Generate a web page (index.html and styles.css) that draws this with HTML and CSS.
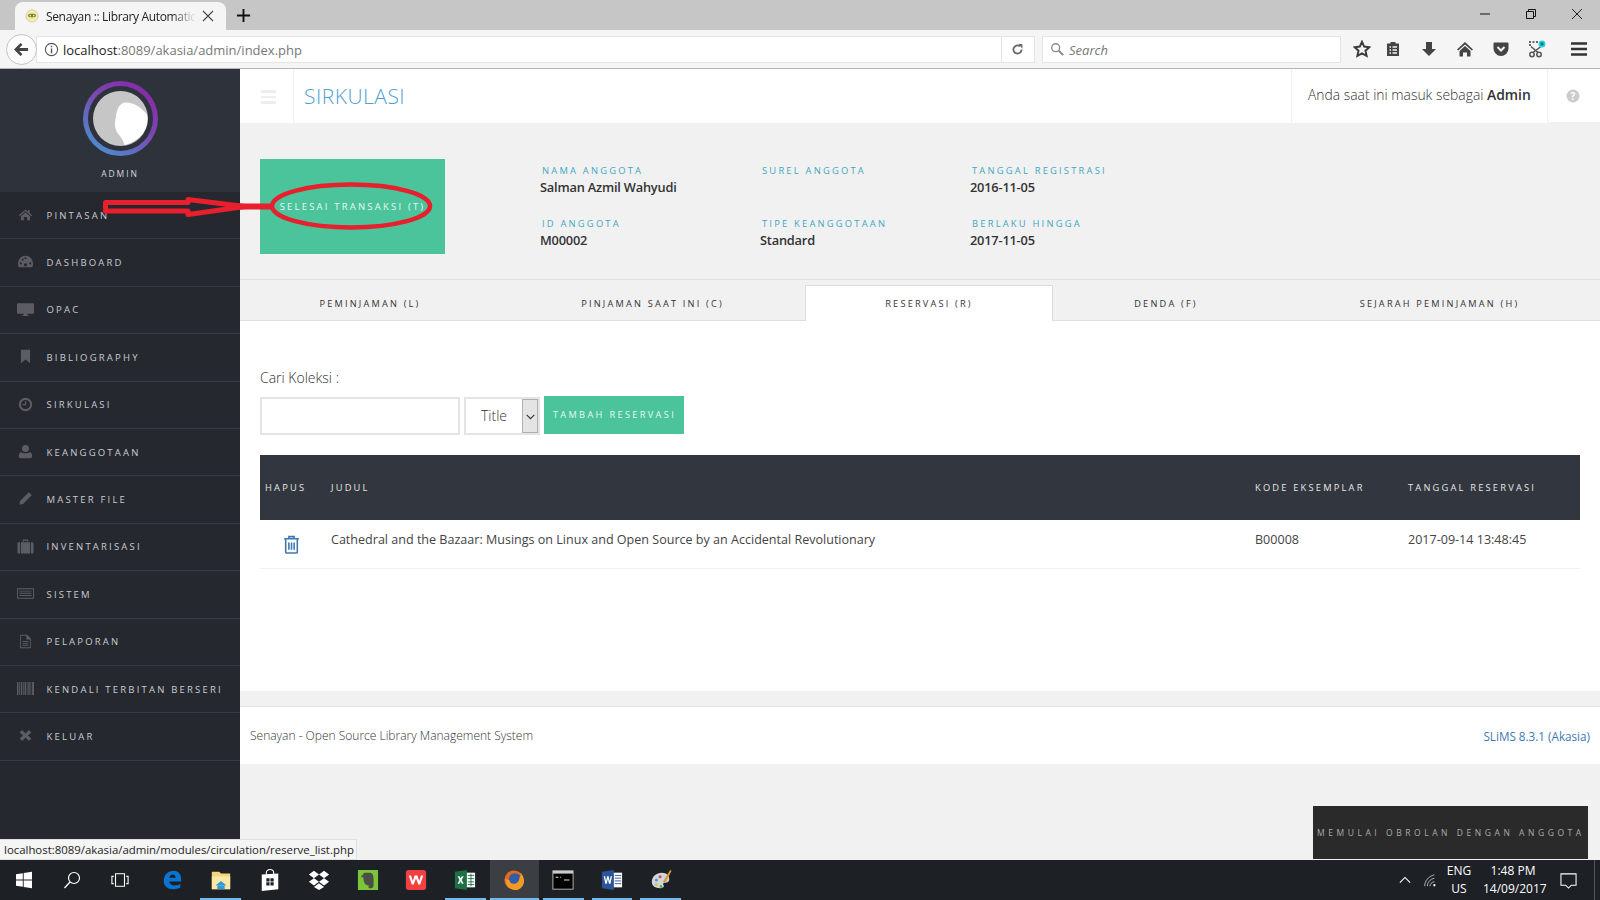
FILE: index.html
```html
<!DOCTYPE html>
<html>
<head>
<title>Senayan :: Library Automation</title>
<link rel="stylesheet" href="styles.css">
</head>
<body>
<div class="tabbar">
	<div class="browser-tab">
		<svg class="favicon" viewBox="0 0 16 16"><circle cx="8" cy="8" r="7" fill="#f3ee9a" stroke="#ccc"/><rect x="3.500" y="5.500" width="9" height="4" rx="2" fill="#777"/><circle cx="6" cy="7.500" r="1" fill="#ff0"/><circle cx="10" cy="7.500" r="1" fill="#ff0"/></svg>
		<span class="browser-tab-title">Senayan :: Library Automatic</span>
		<svg class="tab-close" viewBox="0 0 12 12"><path d="M1 1l10 10M11 1L1 11" stroke="#444" stroke-width="1.1" fill="none"/></svg>
	</div>
	<svg class="new-tab" viewBox="0 0 16 16"><path d="M8 1v14M1 8h14" stroke="#111" stroke-width="2"/></svg>
	<div class="win-controls">
		<svg viewBox="0 0 12 12"><path d="M1 6h10" stroke="#111" stroke-width="1"/></svg>
		<svg viewBox="0 0 12 12"><path d="M1.5 3.5h7v7h-7zM3.5 3.5v-2h7v7h-2" stroke="#111" fill="none"/></svg>
		<svg viewBox="0 0 12 12"><path d="M1 1l10 10M11 1L1 11" stroke="#111" fill="none" stroke-width=".9"/></svg>
	</div>
</div>
<div class="navbar">
	<div class="back-btn"><svg viewBox="0 0 16 16"><path d="M8 2L2 8l6 6M2.5 8H15" stroke="#444" stroke-width="3" fill="none"/></svg></div>
	<div class="urlbar">
		<svg class="info" viewBox="0 0 16 16"><circle cx="8" cy="8" r="6.5" fill="none" stroke="#555" stroke-width="1.2"/><path d="M8 7v5M8 4v1.6" stroke="#555" stroke-width="1.5"/></svg>
		<span class="url"><span class="url-host">localhost</span>:8089/akasia/admin/index.php</span>
		<div class="reload"><svg viewBox="0 0 16 16"><path d="M13 8a5 5 0 1 1-2-4" stroke="#666" stroke-width="2.2" fill="none"/><path d="M9 1l5 .5V7z" fill="#666"/></svg></div>
	</div>
	<div class="searchbar">
		<svg viewBox="0 0 16 16"><circle cx="6.5" cy="6.5" r="4.5" fill="none" stroke="#888" stroke-width="1.6"/><path d="M10 10l5 5" stroke="#888" stroke-width="2.2"/></svg>
		<span>Search</span>
	</div>
	<div class="nav-icons">
		<svg class="ni-star" viewBox="0 0 18 18"><path d="M9 1.8l2.2 4.8 5.2.6-3.9 3.5 1.1 5.2L9 13.3l-4.6 2.6 1.1-5.2L1.6 7.2l5.2-.6z" fill="none" stroke="#3d3d3d" stroke-width="2"/></svg>
		<svg class="ni-clip" viewBox="0 0 18 18"><path d="M3 3.5h3.5V2h5v1.500H15V16H3z" fill="#444"/><path d="M5.500 7h1.500M8.500 7H13M5.500 10h1.500M8.500 10H13M5.500 13h1.500M8.500 13H13" stroke="#f5f5f5" stroke-width="1.300"/></svg>
		<svg class="ni-down" viewBox="0 0 18 18"><path d="M6 2h6v7h4l-7 7-7-7h4z" fill="#444"/></svg>
		<svg class="ni-home" viewBox="0 0 18 18"><path d="M9 2L1 9.500l1.200 1L9 4.500l6.800 6 1.200-1zM3.500 11L9 6l5.500 5v5.500H11v-4H7v4H3.500z" fill="#444"/></svg>
		<svg class="ni-pocket" viewBox="0 0 18 18"><path d="M2.500 2.500h13a1 1 0 0 1 1 1v5a7.500 7.500 0 0 1-15 0v-5a1 1 0 0 1 1-1z" fill="#444"/><path d="M5.500 7L9 10.500 12.500 7" stroke="#f5f5f5" stroke-width="2" fill="none"/></svg>
		<svg class="ni-cut" viewBox="0 0 18 18"><circle cx="4" cy="14.500" r="2.200" fill="none" stroke="#555" stroke-width="1.500"/><circle cx="11" cy="14.500" r="2.200" fill="none" stroke="#555" stroke-width="1.500"/><path d="M5 12.500l8-6M10 12.500L3 6.500" stroke="#555" stroke-width="1.500"/><path d="M1 2h10M1 5h3" stroke="#666" stroke-width="2" stroke-dasharray="2 1.500"/><circle cx="14" cy="4" r="3.500" fill="#22d5e0"/><path d="M14 2v4M12.300 3l3.400 2M15.700 3l-3.400 2" stroke="#155" stroke-width=".8"/></svg>
		<svg class="ni-menu" viewBox="0 0 18 18"><path d="M1 3.500h16M1 9h16M1 14.500h16" stroke="#333" stroke-width="2.600"/></svg>
	</div>
</div>

<div class="app">
	<aside class="sidebar">
		<div class="profile">
			<div class="avatar-ring">
				<svg class="avatar" viewBox="0 0 56 56"><circle cx="28" cy="28" r="28" fill="#c6c6c6"/><path d="M31 12c8-2 18 4 24 12 2 12-4 26-23 31-1-5-4-9-7-12-3-5-3-10-2-15 1-8 3-14 8-16z" fill="#fff"/></svg>
			</div>
			<div class="profile-name">ADMIN</div>
		</div>
		<ul class="menu">
			<li><svg viewBox="0 0 18 18"><path d="M9 3L1 10l1 1 7-6 7 6 1-1-3-2.600V3.500h-2v2.200zM3.500 11L9 6.500l5.500 4.500v5H11v-4H7v4H3.500z"/></svg>PINTASAN</li>
			<li><svg class="wide" viewBox="0 0 18 18"><path d="M9 3a8 8 0 0 0-8 8c0 1.500.4 3 1 4h14c.6-1 1-2.500 1-4a8 8 0 0 0-8-8z"/><g fill="#262830"><circle cx="4" cy="11" r="1.100"/><circle cx="6" cy="7" r="1.100"/><circle cx="9" cy="5.500" r="1.100"/><circle cx="14" cy="11" r="1.100"/><circle cx="9" cy="12.500" r="1.700"/></g></svg>DASHBOARD</li>
			<li><svg class="wide" viewBox="0 0 18 18"><path d="M1 2.500h16a1 1 0 0 1 1 1v9a1 1 0 0 1-1 1h-6V15h1.500v1h-7v-1H7v-1.500H1a1 1 0 0 1-1-1v-9a1 1 0 0 1 1-1z"/></svg>OPAC</li>
			<li><svg viewBox="0 0 18 18"><path d="M3.500 1h11v16L9 12.500 3.500 17z"/></svg>BIBLIOGRAPHY</li>
			<li><svg viewBox="0 0 18 18"><path fill-rule="evenodd" d="M9 1a8 8 0 1 0 0 16A8 8 0 0 0 9 1zm0 2.500a5.500 5.500 0 1 1 0 11 5.500 5.500 0 0 1 0-11z"/><path d="M8.200 5h1.600v4.800H5.500V8.300h2.700z"/></svg>SIRKULASI</li>
			<li><svg viewBox="0 0 18 18"><circle cx="9" cy="5.500" r="4.200"/><path d="M3.500 9.500C5 10.800 7 11.200 9 11.200s4-.4 5.500-1.700c1.800.8 2.500 3 2.500 5.500 0 1.200-1 2-2 2H3c-1 0-2-.8-2-2 0-2.500.7-4.700 2.500-5.500z"/></svg>KEANGGOTAAN</li>
			<li><svg viewBox="0 0 18 18"><path d="M13 1.500l3.500 3.500L6 15.500 1.500 16.500 2.500 12z"/></svg>MASTER FILE</li>
			<li><svg class="wide" viewBox="0 0 18 18"><path d="M6 4V2.500A1 1 0 0 1 7 1.500h4a1 1 0 0 1 1 1V4h-1.300V3H7.300v1zM1.800 4.500h1.500v12H1.800A1.300 1.300 0 0 1 .5 15.200V5.800a1.300 1.300 0 0 1 1.300-1.300zM4.200 4.500h9.600v12H4.200zM14.700 4.500h1.500a1.300 1.300 0 0 1 1.300 1.300v9.400a1.300 1.300 0 0 1-1.300 1.300h-1.500z"/></svg>INVENTARISASI</li>
			<li><svg class="wide" viewBox="0 0 18 18"><path fill-rule="evenodd" d="M0 3.500h18v11H0zm1 1v9h16v-9z"/><path d="M2.500 6h13v1h-13zM2.500 8.300h13v1h-13zM2.500 10.600h13v1h-13z"/></svg>SISTEM</li>
			<li><svg viewBox="0 0 18 18"><path fill-rule="evenodd" d="M2.500 1h8.500l4.500 4.500V17h-13zm1 1v14h11V6.500H10V2z"/><path d="M5.500 8.500h7v1h-7zM5.500 10.800h7v1h-7zM5.500 13h7v1h-7z"/></svg>PELAPORAN</li>
			<li><svg class="wide" viewBox="0 0 18 18"><path d="M0 2h1.500v14H0zM2.300 2h.8v14h-.8zM4 2h1.500v14H4zM6.300 2h.8v14h-.8zM8 2h1.500v14H8zM10.300 2h.8v14h-.8zM12 2h1.500v14H12zM14.300 2h.8v14h-.8zM16 2h2v14h-2z"/></svg>KENDALI TERBITAN BERSERI</li>
			<li><svg viewBox="0 0 18 18"><path d="M5 2.500L9 6.500l4-4 3 3-4 3.500 4 3.500-3 3-4-4-4 4-3-3 4-3.500-4-3.500z"/></svg>KELUAR</li>
		</ul>
	</aside>

	<main class="content">
		<header class="topbar">
			<div class="burger"><span></span><span></span><span></span></div>
			<h1 class="page-title">SIRKULASI</h1>
			<div class="whoami">Anda saat ini masuk sebagai <b>Admin</b></div>
			<div class="help"><svg viewBox="0 0 14 14"><circle cx="7" cy="7" r="6.500" fill="#ccc"/><text x="7" y="10.500" text-anchor="middle" class="help-mark">?</text></svg></div>
		</header>

		<section class="member">
			<button class="btn btn-finish">SELESAI TRANSAKSI (T)</button>
			<div class="member-info">
				<div class="field"><label>NAMA ANGGOTA</label><div>Salman Azmil Wahyudi</div></div>
				<div class="field"><label>SUREL ANGGOTA</label><div>&nbsp;</div></div>
				<div class="field"><label>TANGGAL REGISTRASI</label><div>2016-11-05</div></div>
				<div class="field"><label>ID ANGGOTA</label><div>M00002</div></div>
				<div class="field"><label>TIPE KEANGGOTAAN</label><div>Standard</div></div>
				<div class="field"><label>BERLAKU HINGGA</label><div>2017-11-05</div></div>
			</div>
		</section>

		<nav class="tabs">
			<a>PEMINJAMAN (L)</a>
			<a>PINJAMAN SAAT INI (C)</a>
			<a class="active">RESERVASI (R)</a>
			<a>DENDA (F)</a>
			<a>SEJARAH PEMINJAMAN (H)</a>
		</nav>

		<section class="panel">
			<div class="search-label">Cari Koleksi :</div>
			<form class="search-form">
				<input type="text" class="search-input">
				<div class="select-box"><span>Title</span><i><svg viewBox="0 0 10 10"><path d="M1.500 3.500L5 7l3.500-3.500" stroke="#333" fill="none"/></svg></i></div>
				<button type="button" class="btn btn-add">TAMBAH RESERVASI</button>
			</form>
			<table class="grid">
				<thead>
					<tr><th class="col-del">HAPUS</th><th class="col-title">JUDUL</th><th class="col-code">KODE EKSEMPLAR</th><th class="col-date">TANGGAL RESERVASI</th></tr>
				</thead>
				<tbody>
					<tr>
						<td><svg class="trash" viewBox="0 0 16 18"><path d="M5.500 3V1.500h5V3M1 3.500h14M2.500 3.500V16a1 1 0 0 0 1 1h9a1 1 0 0 0 1-1V3.500M5.500 7v7M8 7v7M10.500 7v7" fill="none" stroke="#3f78b0" stroke-width="1.500"/></svg></td>
						<td>Cathedral and the Bazaar: Musings on Linux and Open Source by an Accidental Revolutionary</td>
						<td>B00008</td>
						<td>2017-09-14 13:48:45</td>
					</tr>
				</tbody>
			</table>
		</section>

		<footer class="foot">
			<span>Senayan - Open Source Library Management System</span>
			<a>SLiMS 8.3.1 (Akasia)</a>
		</footer>
	</main>
</div>

<div class="taskbar">
	<div class="task-slot sys"><svg viewBox="0 0 18 18"><path d="M1 3.200l6.800-1V8.500H1zM8.700 2l8.300-1.200V8.500H8.700zM1 9.500h6.800v6.300l-6.800-1zM8.700 9.500H17v7.700L8.700 16z" fill="#fff"/></svg></div>
	<div class="task-slot sys"><svg viewBox="0 0 18 18"><circle cx="11" cy="7" r="5.500" fill="none" stroke="#fff" stroke-width="1.200"/><path d="M7 11l-5.500 6" stroke="#fff" stroke-width="1.300"/></svg></div>
	<div class="task-slot sys"><svg viewBox="0 0 20 18"><path d="M5 2h10v14H5zM3 5H1v8h2M17 5h2v8h-2" fill="none" stroke="#fff" stroke-width="1.200"/></svg></div>
	<div class="task-slot app-slot"><svg viewBox="0 0 24 24"><path d="M3 13C3 6 8 2 14 2c5 0 8 4 8 9v2.500H9c.3 3 3 4.500 6 4.500 2.500 0 4.500-.7 6-1.800v4.300c-2 1-4.200 1.500-7 1.500C7 22 3 18.500 3 13zm6-3.500h7c0-2-1.300-3.500-3.300-3.500C11 6 9.500 7.500 9 9.500z" fill="#0a74d0"/></svg></div>
	<div class="task-slot app-slot running"><svg viewBox="0 0 24 24"><path d="M2 3h8l2 2h10v17H2z" fill="#f4d67a"/><path d="M2 8h20v14H2z" fill="#fbe7a6"/><path d="M8 22v-4h8v4z" fill="#2f9bd8"/><path d="M6 18l6-5 6 5z" fill="#2f9bd8"/></svg></div>
	<div class="task-slot app-slot"><svg viewBox="0 0 24 24"><path d="M3 6l18-1v17l-18 2z" fill="#fff"/><path d="M8 6V4a4 3.500 0 0 1 8 0v2" fill="none" stroke="#fff" stroke-width="1.200"/><path d="M8 10h3.500v3.500H8zM12.500 10H16v3.500h-3.500zM8 14.500h3.500V18H8zM12.500 14.500H16V18h-3.500z" fill="#1d1f24"/></svg></div>
	<div class="task-slot app-slot"><svg viewBox="0 0 24 24"><path d="M6.500 2L1 6l5.500 4L12 6zM17.500 2L12 6l5.500 4L23 6zM1 14l5.500 4 5.500-4-5.500-4zM23 14l-5.500 4-5.500-4 5.500-4zM6.500 19.500L12 23l5.500-3.500L12 15.500z" fill="#fff"/></svg></div>
	<div class="task-slot app-slot"><svg viewBox="0 0 24 24"><rect x="1" y="1" width="22" height="22" rx="1" fill="#7cc43a"/><path d="M8 4h6c3 0 4 3 4 6v8c0 2-1 3-3 3h-1c-2 0-2-3 0-3-2 0-5-.5-6-3-1-2-1-4-1-6L4 9z" fill="#4a4f48"/></svg></div>
	<div class="task-slot app-slot"><svg viewBox="0 0 24 24"><rect x="1" y="1" width="22" height="22" rx="3" fill="#f0403f"/><path d="M4 7l3.500 10h2L12 10l2.500 7h2L20 7h-2.500l-2 6-2-6h-3l-2 6-2-6z" fill="#fff"/></svg></div>
	<div class="task-slot app-slot running"><svg viewBox="0 0 24 24"><path d="M1 3l13-2v22L1 21z" fill="#1d7044"/><path d="M14 4h9v16h-9z" fill="#fff"/><path d="M15 7h7M15 10.500h7M15 14h7M15 17h7M18.500 5v14" stroke="#1d7044"/><path d="M4 8l2 4-2 4h2l1.300-2.600L8.500 16h2l-2.100-4 2.100-4h-2L7.300 10.400 6 8z" fill="#fff"/></svg></div>
	<div class="task-slot app-slot running active"><svg viewBox="0 0 24 24"><circle cx="12" cy="12" r="10.500" fill="#e8691d"/><circle cx="13" cy="11" r="6.500" fill="#2f5da8"/><path d="M3 10c-1 8 5 13 10 13 6 0 10-5 10-10 0-4-2-7-4-9 1 3 0 4-1 5 0 5-4 8-7 7-3 0-4-2-4-4-2 0-3-1-4-2z" fill="#f19a24"/></svg></div>
	<div class="task-slot app-slot running"><svg viewBox="0 0 24 24"><rect x="1" y="2" width="22" height="20" fill="#000" stroke="#bbb"/><rect x="1" y="2" width="22" height="3" fill="#ccc"/><path d="M4 9h3M9 9h1M13 12h6" stroke="#ddd" stroke-width="1.200"/></svg></div>
	<div class="task-slot app-slot running"><svg viewBox="0 0 24 24"><path d="M1 3l13-2v22L1 21z" fill="#2a5699"/><path d="M14 4h9v16h-9z" fill="#fff"/><path d="M15 7h7M15 10h7M15 13h7M15 16h7" stroke="#2a5699"/><path d="M3 8l1.700 8h1.600L7.500 11l1.200 5h1.600L12 8h-1.500l-1 5L8.300 8H6.700l-1.200 5-1-5z" fill="#fff"/></svg></div>
	<div class="task-slot app-slot running"><svg viewBox="0 0 24 24"><path d="M2 14c0-6 5-10 11-10 5 0 8 3 8 7s-3 4-5 4-2 2-1 3-1 3-4 3c-5 0-9-2-9-7z" fill="#cfd6dc"/><circle cx="7" cy="12" r="1.700" fill="#3aa0e0"/><circle cx="11" cy="8.500" r="1.700" fill="#e04a3a"/><circle cx="7" cy="17" r="1.700" fill="#f0c030"/><circle cx="12" cy="19" r="1.500" fill="#4ab050"/><path d="M14 14L22 1l1.500 1L17 15z" fill="#d99a3a"/></svg></div>
	<div class="tray">
		<svg class="tray-chevron" viewBox="0 0 14 8"><path d="M1 7l6-6 6 6" stroke="#fff" stroke-width="1.300" fill="none"/></svg>
		<svg class="tray-wifi" viewBox="0 0 16 16"><path d="M2 15C2 9 6 4 13 2M5 15c0-4 3-8 8-9M8 15c0-2 2-5 5-5" stroke="#ccc" fill="none"/><circle cx="13" cy="14" r="1.300" fill="#fff"/></svg>
		<div class="tray-lang">ENG<br>US</div>
		<div class="tray-clock">1:48 PM<br>14/09/2017</div>
		<svg class="tray-note" viewBox="0 0 18 18"><path d="M1 2h16v12h-5l-3 3-3-3H1z" fill="none" stroke="#fff" stroke-width="1.100"/></svg>
	</div>
</div>

<div class="status-tip">localhost:8089/akasia/admin/modules/circulation/reserve_list.php</div>
<div class="chat-box">MEMULAI OBROLAN DENGAN ANGGOTA</div>
<svg class="scribble" viewBox="0 0 1600 900">
	<path d="M105.500 202.500H188V199.500L245 206.500L188 214.500V211H105.500Z" fill="none" stroke="#e81f2d" stroke-width="5" stroke-linejoin="round"/>
	<path d="M238 206.500H272" stroke="#e81f2d" stroke-width="6"/>
	<ellipse cx="351" cy="206" rx="79" ry="21.500" fill="none" stroke="#e81f2d" stroke-width="4.500"/>
</svg>
</body>
</html>
```

FILE: styles.css
```css
* {
	box-sizing: border-box;
}
html, body {
	margin: 0;
	height: 900px;
	overflow: hidden;
}
body {
	display: flex;
	flex-direction: column;
	font-family: "Open Sans", sans-serif;
	color: #333;
	background: #f1f1f1;
	position: relative;
}

/* browser chrome */
.tabbar {
	height: 30px;
	background: #c6c6c6;
	display: flex;
	align-items: flex-end;
	flex: none;
}
.browser-tab {
	margin-left: 15px;
	width: 211px;
	height: 28px;
	background: #f5f5f5;
	border-radius: 8px 8px 0 0;
	display: flex;
	align-items: center;
	padding: 0 13px 0 10px;
	font-size: 12px;
	letter-spacing: -.35px;
	color: #222;
}
.favicon {
	width: 14px;
	height: 14px;
	margin-right: 7px;
	flex: none;
}
.browser-tab-title {
	flex: 1;
	white-space: nowrap;
	-webkit-mask-image: linear-gradient(to right, #000 84%, transparent 100%);
	mask-image: linear-gradient(to right, #000 84%, transparent 100%);
}
.tab-close {
	width: 12px;
	height: 12px;
	margin-left: 6px;
	flex: none;
}
.new-tab {
	width: 15px;
	height: 15px;
	margin: 0 0 7px 10px;
}
.win-controls {
	margin-left: auto;
	align-self: stretch;
	display: flex;
	align-items: center;
	gap: 34px;
	padding: 0 17px 2px 0;
}
.win-controls svg {
	width: 12px;
	height: 12px;
}
.navbar {
	height: 39px;
	flex: none;
	background: #f5f5f5;
	border-bottom: 1px solid #b5b5b5;
	display: flex;
	align-items: center;
	position: relative;
	padding-left: 6px;
}
.back-btn {
	width: 31px;
	height: 31px;
	border-radius: 50%;
	border: 1px solid #c4c4c4;
	background: #fbfbfb;
	display: flex;
	align-items: center;
	justify-content: center;
	flex: none;
	z-index: 1;
}
.back-btn svg {
	width: 15px;
	height: 15px;
}
.urlbar {
	width: 999px;
	height: 27px;
	margin-left: -1px;
	background: #fff;
	border: 1px solid #e4e4e4;
	display: flex;
	align-items: center;
	padding-left: 7px;
	font-size: 13px;
	color: #777;
}
.info {
	width: 15px;
	height: 15px;
	margin-right: 4px;
}
.url {
	flex: 1;
	padding-top: 1px;
}
.url-host {
	color: #222;
}
.reload {
	width: 33px;
	height: 100%;
	border-left: 1px solid #e4e4e4;
	display: flex;
	align-items: center;
	justify-content: center;
	padding-right: 2px;
}
.reload svg {
	width: 13px;
	height: 13px;
}
.searchbar {
	width: 299px;
	height: 27px;
	margin-left: 7px;
	background: #fff;
	border: 1px solid #e4e4e4;
	display: flex;
	align-items: center;
	padding-left: 7px;
	gap: 5px;
	font-size: 13px;
	font-style: italic;
	color: #777;
}
.searchbar span {
	padding-top: 1px;
}
.searchbar svg {
	width: 14px;
	height: 14px;
}
.nav-icons {
	display: flex;
	align-items: center;
	flex: 1;
	height: 100%;
	position: relative;
}
.nav-icons svg {
	width: 18px;
	height: 18px;
	position: absolute;
	top: 10px;
}
.ni-star { left: 12px; }
.ni-clip { left: 43px; }
.ni-down { left: 79px; }
.ni-home { left: 115px; }
.ni-pocket { left: 151px; }
.ni-cut { left: 187px; }
.ni-menu { left: 229px; }

/* app */
.app {
	height: 791px;
	flex: none;
	display: flex;
}
.sidebar {
	width: 240px;
	flex: none;
	background: #262830;
	display: flex;
	flex-direction: column;
}
.profile {
	height: 123px;
	flex: none;
	background: #2e323b;
	display: flex;
	flex-direction: column;
	align-items: center;
	padding-top: 12px;
}
.avatar-ring {
	width: 75px;
	height: 75px;
	border-radius: 50%;
	background: linear-gradient(215deg, #8a1fa8, #7a48b0 45%, #3f9fd8);
	padding: 5px;
	position: relative;
}
.avatar-ring::before {
	content: "";
	position: absolute;
	inset: 5px;
	border-radius: 50%;
	background: #2e323b;
}
.avatar {
	position: relative;
	display: block;
	width: 55px;
	height: 55px;
	margin: 5px 0 0 5px;
}
.profile-name {
	margin-top: 12px;
	font-size: 8.5px;
	letter-spacing: 1.9px;
	color: #d8d8d8;
	line-height: 12px;
}
.menu {
	list-style: none;
	margin: 0;
	padding: 0;
}
.menu li {
	height: 47.4px;
	border-bottom: 1px solid #363a44;
	display: flex;
	align-items: center;
	padding-left: 46.5px;
	position: relative;
	font-size: 9.5px;
	letter-spacing: 2.2px;
	color: #c9cbcf;
	white-space: nowrap;
}
.menu svg {
	position: absolute;
	left: 18px;
	top: 15px;
	width: 15px;
	height: 15px;
	fill: #5b5d63;
}
.menu svg.wide {
	left: 17px;
	top: 14px;
	width: 17px;
	height: 17px;
}

.content {
	flex: 1;
	display: flex;
	flex-direction: column;
	background: #f1f1f1;
	min-width: 0;
}
.topbar {
	height: 54px;
	flex: none;
	background: #fff;
	display: flex;
	align-items: stretch;
}
.burger {
	width: 54px;
	border-right: 1px solid #f0f0f0;
	display: flex;
	flex-direction: column;
	justify-content: center;
	gap: 3px;
	padding: 2px 17px 0 21px;
}
.burger span {
	height: 2.500px;
	background: #eee;
}
.page-title {
	margin: 0;
	padding-left: 10px;
	font-size: 21px;
	font-weight: 300;
	line-height: 55px;
	color: #4f9fd3;
	letter-spacing: .5px;
	flex: 1;
}
.whoami {
	width: 256px;
	border-left: 1px solid #f0f0f0;
	padding-left: 16px;
	font-size: 13.9px;
	font-weight: 300;
	line-height: 52px;
	color: #333;
	white-space: nowrap;
}
.whoami b {
	font-weight: 600;
}
.help {
	width: 53px;
	border-left: 1px solid #f0f0f0;
	border-bottom: 1px solid #f0f0f0;
	display: flex;
	align-items: center;
	justify-content: center;
	padding: 0 2px 0 0;
}
.help svg {
	width: 14px;
	height: 14px;
}
.help-mark {
	font-size: 10px;
	font-weight: 700;
	fill: #fff;
}

.member {
	height: 156px;
	flex: none;
	display: flex;
	padding: 36px 0 0 20px;
}
.btn {
	border: 0;
	background: #4bc49b;
	color: #e8f7f2;
	font-family: inherit;
	font-size: 9.5px;
	letter-spacing: 2.2px;
}
.btn-finish {
	width: 185px;
	height: 95px;
	padding: 0;
	white-space: nowrap;
}
.member-info {
	margin-left: 95px;
	display: grid;
	grid-template-columns: 220px 210px 200px;
	grid-auto-rows: 53px;
	padding-top: 5px;
}
.field label {
	display: block;
	padding-left: 2px;
	font-size: 9.4px;
	letter-spacing: 2.2px;
	line-height: 14px;
	color: #42a7c0;
}
.field div {
	font-size: 12.8px;
	font-weight: 600;
	line-height: 19px;
	color: #333;
	letter-spacing: -.2px;
}

.tabs {
	height: 42px;
	flex: none;
	border-top: 1px solid #e0e0e0;
	border-bottom: 1px solid #ddd;
	display: grid;
	grid-template-columns: 260px 305px 248px 226px 321px;
	margin-bottom: -1px;
	position: relative;
}
.tabs a {
	display: flex;
	align-items: center;
	justify-content: center;
	padding-top: 6px;
	font-size: 9.2px;
	letter-spacing: 2.2px;
	color: #333;
}
.tabs a.active {
	margin-top: 5px;
	margin-bottom: -1px;
	padding-top: 0;
	background: #fff;
	border: 1px solid #ddd;
	border-bottom: 0;
}

.panel {
	height: 371px;
	flex: none;
	background: #fff;
	padding: 48px 20px 0 20px;
}
.search-label {
	font-size: 14px;
	font-weight: 300;
	line-height: 20px;
	color: #333;
}
.search-form {
	display: flex;
	margin-top: 8px;
	height: 39px;
}
.search-input {
	width: 200px;
	height: 38px;
	margin-top: 1px;
	border: 2px solid #e4e4e4;
	background: #fff;
}
.select-box {
	width: 76px;
	height: 38px;
	margin: 1px 0 0 4px;
	border: 2px solid #e4e4e4;
	display: flex;
	font-size: 14px;
	font-weight: 300;
	align-items: center;
	color: #333;
}
.select-box span {
	flex: 1;
	text-align: center;
	padding-bottom: 1px;
}
.select-box i {
	width: 16px;
	height: 100%;
	background: #e4e4e4;
	border: 1px solid #b0b0b0;
	display: flex;
	align-items: center;
	justify-content: center;
}
.select-box svg {
	width: 11px;
	height: 11px;
}
.btn-add {
	width: 140px;
	height: 38px;
	margin-left: 4px;
	padding: 0 0 1px 1px;
	font-size: 9.2px;
	letter-spacing: 2.35px;
}
.grid {
	width: 1320px;
	margin-top: 20px;
	border-collapse: collapse;
	table-layout: fixed;
}
.grid th {
	height: 65px;
	background: #32363f;
	color: #e6e6e6;
	font-size: 9.3px;
	font-weight: 400;
	letter-spacing: 2.2px;
	text-align: left;
	padding: 0 0 0 5px;
}
.col-del {
	width: 66px;
}
.col-title {
	width: 924px;
}
.col-code {
	width: 153px;
}
.grid td {
	height: 48px;
	padding: 0 0 8px 5px;
	border-bottom: 1px solid #efefef;
	font-size: 12.55px;
	color: #444;
	white-space: nowrap;
}
.trash {
	display: block;
	width: 17px;
	height: 19px;
	margin: 9px 0 0 18px;
}

.foot {
	height: 58px;
	flex: none;
	margin-top: 15px;
	background: #fff;
	border-top: 1px solid #e0e0e0;
	display: flex;
	align-items: center;
	justify-content: space-between;
	padding: 0 10px;
	font-size: 12px;
	font-weight: 300;
	color: #333;
}
.foot a {
	color: #3f78b0;
	font-size: 11.7px;
	font-weight: 400;
}

/* taskbar */
.taskbar {
	height: 40px;
	flex: none;
	background: #1d2025;
	display: flex;
	position: relative;
}
.task-slot {
	width: 48px;
	height: 40px;
	display: flex;
	align-items: center;
	justify-content: center;
	flex: none;
	position: relative;
}
.task-slot svg {
	width: 22px;
	height: 24px;
}
.task-slot.sys svg {
	width: 18px;
	height: 18px;
}
.app-slot {
	width: 48.9px;
}
.sys + .app-slot {
	margin-left: 3.5px;
}
.running::after {
	content: "";
	position: absolute;
	left: 4px;
	right: 4px;
	bottom: 0;
	height: 2px;
	background: #76b9ed;
}
.active {
	background: #3b3e43;
}
.active::after {
	left: 0;
	right: 0;
}
.tray {
	margin-left: auto;
	display: flex;
	align-items: center;
	color: #fff;
	font-size: 12px;
	line-height: 18px;
	text-align: center;
	position: relative;
	width: 201px;
	height: 40px;
	border-right: 1px solid #555;
	margin-right: 5px;
}
.tray-chevron {
	width: 12px;
	height: 8px;
	margin-left: 5px;
}
.tray-wifi {
	width: 14px;
	height: 14px;
	margin-left: 12px;
}
.tray-lang {
	width: 30px;
	margin-left: 7px;
}
.tray-clock {
	width: 60px;
	margin-left: 9px;
}
.tray-note {
	width: 17px;
	height: 17px;
	margin-left: 17px;
}

/* overlays */
.status-tip {
	position: absolute;
	left: 0;
	top: 839px;
	height: 21px;
	width: 357px;
	background: #f5f5f5;
	border: 1px solid #e0e0e0;
	border-left: 0;
	padding-left: 4px;
	font-size: 11.4px;
	line-height: 20px;
	color: #222;
	white-space: nowrap;
}
.chat-box {
	position: absolute;
	left: 1313px;
	top: 806px;
	width: 275px;
	height: 53px;
	padding-left: 4px;
	background: #2a2a2a;
	color: #aaa;
	font-size: 8.5px;
	letter-spacing: 3.55px;
	line-height: 53px;
	white-space: nowrap;
}
.scribble {
	position: absolute;
	left: 0;
	top: 0;
	width: 1600px;
	height: 900px;
	pointer-events: none;
}
```
